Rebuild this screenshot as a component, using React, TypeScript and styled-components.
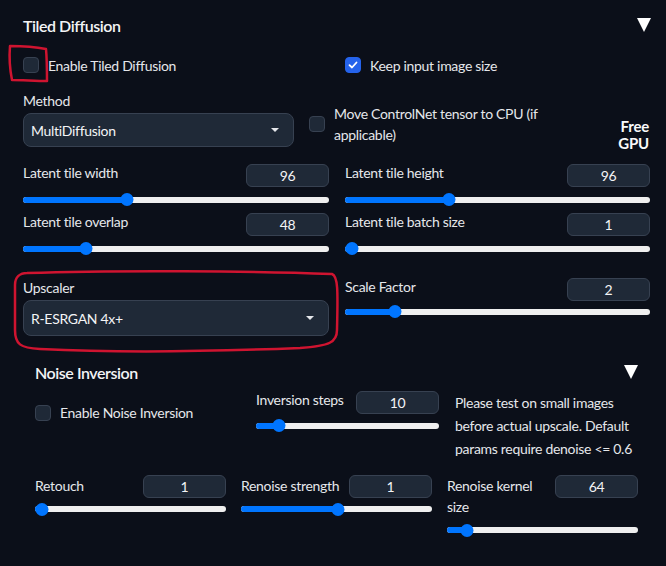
import React from "react";
import styled, { createGlobalStyle } from "styled-components";

const Global = createGlobalStyle`
  html, body { margin: 0; padding: 0; background: #0b0f19; }
  body { font-family: Lato, "Liberation Sans", sans-serif; color: #e5e7eb; font-size: 14px; letter-spacing: -0.3px; }
  * { box-sizing: border-box; }
`;

const Page = styled.div`
  position: relative;
  width: 666px;
  height: 566px;
  overflow: hidden;
  background: #0b0f19;
  padding: 0 15px 0 23px;
`;

const Header = styled.div<{ $h: number }>`
  display: flex;
  align-items: center;
  justify-content: space-between;
  height: ${(p) => p.$h}px;
`;

const Title = styled.div<{ $size: number }>`
  font-size: ${(p) => p.$size}px;
  font-weight: 600;
  letter-spacing: -0.45px;
  color: #f3f4f6;
`;

const Caret = styled.span`
  width: 0;
  height: 0;
  border-left: 7.5px solid transparent;
  border-right: 7.5px solid transparent;
  border-top: 14px solid #ffffff;
`;

const TwoCol = styled.div<{ $mt: number; $rowGap?: number }>`
  display: grid;
  grid-template-columns: 306px 305px;
  column-gap: 16px;
  row-gap: ${(p) => p.$rowGap ?? 0}px;
  margin-top: ${(p) => p.$mt}px;
  align-items: start;
`;

const CheckRow = styled.div`
  display: grid;
  grid-template-columns: 306px 305px;
  column-gap: 16px;
  height: 30px;
  align-items: center;
`;

const CheckLabel = styled.label<{ $mt?: number }>`
  display: flex;
  align-items: center;
  gap: 9px;
  margin-top: ${(p) => p.$mt ?? 0}px;
  font-size: 14px;
  line-height: 21px;
  color: #e5e7eb;
`;

const Box = styled.span<{ $checked?: boolean }>`
  flex-shrink: 0;
  width: 16px;
  height: 16px;
  border-radius: 4px;
  display: flex;
  align-items: center;
  justify-content: center;
  background: ${(p) => (p.$checked ? "#2563eb" : "#1f2937")};
  border: 1px solid ${(p) => (p.$checked ? "#2563eb" : "#374151")};
`;

const Checkbox = ({ checked }: { checked?: boolean }) => (
  <Box $checked={checked}>
    {checked && (
      <svg width="12" height="12" viewBox="0 0 12 12">
        <path d="M2.5 6.2 L5 8.5 L9.5 3.5" fill="none" stroke="#fff" strokeWidth="1.8" strokeLinecap="round" strokeLinejoin="round" />
      </svg>
    )}
  </Box>
);

const MethodRow = styled.div`
  display: flex;
  align-items: flex-start;
  padding-top: 11px;
  padding-right: 2px;
  height: 67px;
`;

const Field = styled.div<{ $w: number }>`
  width: ${(p) => p.$w}px;
  flex-shrink: 0;
  display: flex;
  flex-direction: column;
`;

const Label = styled.div<{ $lh?: number }>`
  font-size: 14px;
  line-height: ${(p) => p.$lh ?? 20}px;
  color: #e5e7eb;
  white-space: nowrap;
`;

const Select = styled.div<{ $h: number }>`
  margin-top: 2px;
  height: ${(p) => p.$h}px;
  background: #1f2937;
  border: 1px solid #374151;
  border-radius: 8px;
  display: flex;
  align-items: center;
  justify-content: space-between;
  padding: 0 14px 0 7px;
  font-size: 14px;
  color: #f3f4f6;
`;

const SelectArrow = styled.span`
  width: 0;
  height: 0;
  border-left: 4px solid transparent;
  border-right: 4px solid transparent;
  border-top: 4px solid #e5e7eb;
`;

const CpuOption = styled(CheckLabel)`
  margin-left: 15px;
  align-items: center;
`;

const FreeGpu = styled.div`
  margin-left: auto;
  margin-top: 27px;
  text-align: right;
  font-size: 15px;
  font-weight: 700;
  line-height: 17px;
  letter-spacing: -0.2px;
  color: #f9fafb;
`;

const SliderWrap = styled.div`
  display: flex;
  flex-direction: column;
`;

const SliderHead = styled.div<{ $h: number }>`
  display: flex;
  justify-content: space-between;
  align-items: flex-start;
  min-height: ${(p) => p.$h}px;
`;

const NumBox = styled.div`
  flex-shrink: 0;
  width: 83px;
  height: 23px;
  background: #1f2937;
  border: 1px solid #374151;
  border-radius: 6px;
  display: flex;
  align-items: center;
  justify-content: center;
  font-size: 14px;
  color: #f3f4f6;
`;

const Track = styled.div<{ $mt: number }>`
  position: relative;
  height: 13px;
  margin-top: ${(p) => p.$mt}px;
  display: flex;
  align-items: center;
`;

const Rail = styled.div`
  width: 100%;
  height: 6px;
  border-radius: 3px;
  background: #efefef;
`;

const Fill = styled.div`
  position: absolute;
  left: 0;
  top: 3.5px;
  height: 6px;
  border-radius: 3px;
  background: #0075ff;
`;

const Thumb = styled.div`
  position: absolute;
  top: 0;
  width: 13px;
  height: 13px;
  border-radius: 50%;
  background: #0075ff;
  transform: translateX(-6.5px);
`;

type SliderProps = {
  label: React.ReactNode;
  value: string;
  pos: number;
  lh?: number;
  gap?: number;
};

const Slider = ({ label, value, pos, lh = 18, gap = 6 }: SliderProps) => {
  const center = `calc(6.5px + (100% - 13px) * ${pos})`;
  return (
    <SliderWrap>
      <SliderHead $h={23}>
        <Label $lh={lh}>{label}</Label>
        <NumBox>{value}</NumBox>
      </SliderHead>
      <Track $mt={gap}>
        <Rail />
        <Fill style={{ width: center }} />
        <Thumb style={{ left: center }} />
      </Track>
    </SliderWrap>
  );
};

const Section = styled.div`
  margin: 23px 13px 0 12px;
`;

const NoiseRow = styled.div`
  display: grid;
  grid-template-columns: 205px 183px 184px;
  column-gap: 16px;
  margin-top: 6px;
  align-items: start;
`;

const Note = styled.div`
  font-size: 14px;
  line-height: 23px;
  margin-top: -0.5px;
  color: #e5e7eb;
`;

const ThreeCol = styled.div`
  display: grid;
  grid-template-columns: 191px 191px 191px;
  column-gap: 15px;
  margin-top: 15px;
  align-items: start;
`;

const Annotations = styled.svg`
  position: absolute;
  left: 0;
  top: 0;
  pointer-events: none;
`;

export default function App() {
  return (
    <>
      <Global />
      <Page>
        <Header $h={50}>
          <Title $size={16}>Tiled Diffusion</Title>
          <Caret />
        </Header>

        <CheckRow>
          <CheckLabel>
            <Checkbox />
            Enable Tiled Diffusion
          </CheckLabel>
          <CheckLabel>
            <Checkbox checked />
            Keep input image size
          </CheckLabel>
        </CheckRow>

        <MethodRow>
          <Field $w={271}>
            <Label>Method</Label>
            <Select $h={34}>
              MultiDiffusion
              <SelectArrow />
            </Select>
          </Field>
          <CpuOption $mt={12}>
            <Checkbox />
            <span>
              Move ControlNet tensor to CPU (if
              <br />
              applicable)
            </span>
          </CpuOption>
          <FreeGpu>
            Free
            <br />
            GPU
          </FreeGpu>
        </MethodRow>

        <TwoCol $mt={17} $rowGap={7}>
          <Slider label="Latent tile width" value="96" pos={0.333} />
          <Slider label="Latent tile height" value="96" pos={0.334} />
          <Slider label="Latent tile overlap" value="48" pos={0.193} />
          <Slider label="Latent tile batch size" value="1" pos={0} />
        </TwoCol>

        <TwoCol $mt={23}>
          <Field $w={306}>
            <Label>Upscaler</Label>
            <Select $h={36}>
              R-ESRGAN 4x+
              <SelectArrow />
            </Select>
          </Field>
          <Slider label="Scale Factor" value="2" pos={0.149} gap={4} />
        </TwoCol>

        <Section>
          <Header $h={26}>
            <Title $size={16}>Noise Inversion</Title>
            <Caret />
          </Header>
          <NoiseRow>
            <CheckLabel $mt={11}>
              <Checkbox />
              Enable Noise Inversion
            </CheckLabel>
            <Slider label="Inversion steps" value="10" pos={0.097} gap={5} />
            <Note>
              Please test on small images before actual upscale. Default params require denoise &lt;= 0.6
            </Note>
          </NoiseRow>
          <ThreeCol>
            <Slider label="Retouch" value="1" pos={0} lh={21} gap={5} />
            <Slider label="Renoise strength" value="1" pos={0.506} lh={21} gap={5} />
            <Slider
              label={
                <>
                  Renoise kernel
                  <br />
                  size
                </>
              }
              value="64"
              pos={0.076}
              lh={21}
              gap={7}
            />
          </ThreeCol>
        </Section>

        <Annotations width="666" height="566" viewBox="0 0 666 566">
          <path
            d="M10 46 C 20 46, 36 47, 46 49 C 47 60, 47 70, 47 81 C 36 81, 22 80, 12 80 C 10 70, 9 58, 10 46 Z"
            fill="none"
            stroke="#cf1430"
            strokeWidth="2.5"
            strokeLinejoin="round"
          />
          <path
            d="M27 273 C 120 270, 250 271, 332 274 C 338 276, 338 290, 337 330 C 337 342, 330 346, 300 348 C 200 352, 100 352, 40 349 C 20 348, 15 344, 15 330 L 15 285 C 15 277, 20 273, 27 273 Z"
            fill="none"
            stroke="#cf1430"
            strokeWidth="2.5"
            strokeLinejoin="round"
          />
        </Annotations>
      </Page>
    </>
  );
}
